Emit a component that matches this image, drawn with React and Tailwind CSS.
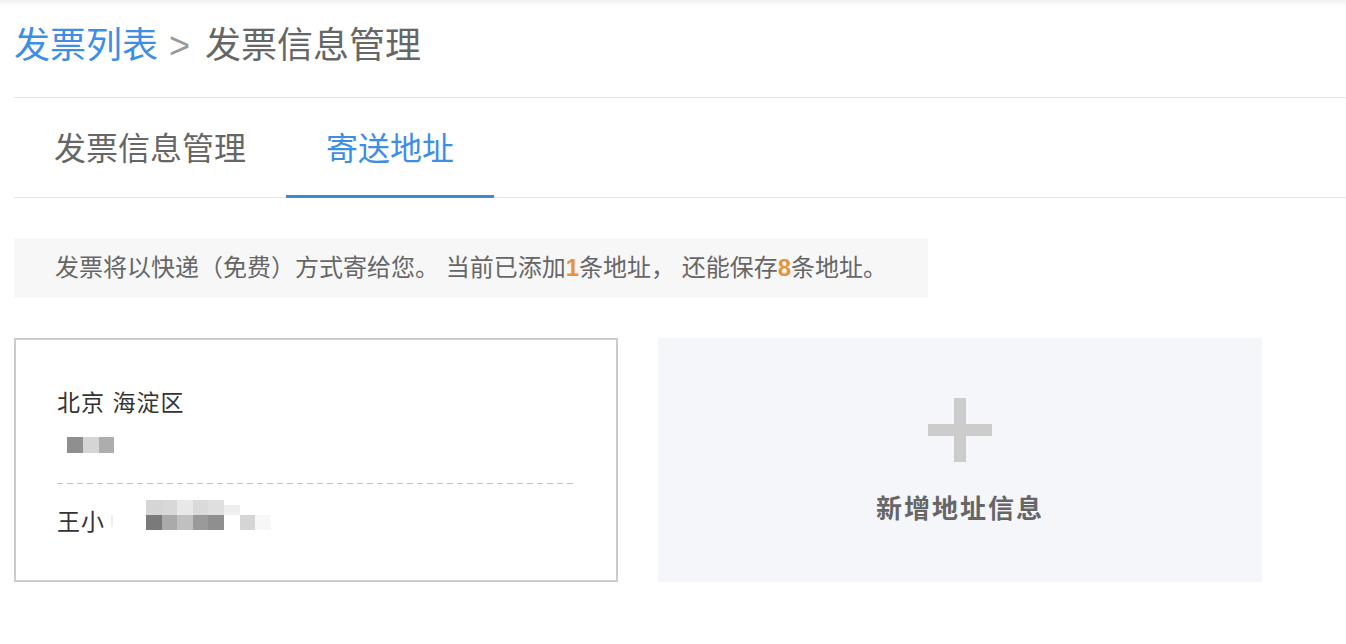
import React from 'react';

const FONT = { fontFamily: '"Liberation Sans", "Noto Sans CJK SC", sans-serif' };

// blurred phone number cells, second line of the card
const topCells = ['#d5d5d5', '#d8d8d8', '#e8e8e8', '#dadada', '#dfdfdf'];
const bottomCells = ['#7a7a7a', '#aaaaaa', '#c0c0c0', '#9a9a9a', '#8f8f8f'];

function Tabs() {
  return (
    <div className="flex border-b border-[#e6e6e6]">
      <div className="h-[100px] -mb-px flex items-center pt-[4px] px-[40px] border-b-[3px] border-transparent text-[32px] leading-[36px] text-[#666]">
        发票信息管理
      </div>
      <div className="h-[100px] -mb-px flex items-center pt-[4px] px-[40px] border-b-[3px] border-[#3b87e0] text-[32px] leading-[36px] text-[#3d8ee4]">
        寄送地址
      </div>
    </div>
  );
}

function AddressCard() {
  return (
    <div className="w-[604px] h-[244px] border-2 border-[#cccccc] bg-white pl-[41px] pr-[39px] pt-[51px]">
      <div className="text-[23px] leading-[24px] tracking-[1px] text-[#333]">北京 海淀区</div>
      <div className="mt-[22px] flex ml-[10px]">
        <div className="w-4 h-4 bg-[#8f8f8f]" />
        <div className="w-4 h-4 bg-[#d4d6d4]" />
        <div className="w-[15px] h-4 bg-[#adadad]" />
      </div>
      <div className="mt-[30px] h-px bg-[repeating-linear-gradient(to_right,#c4c4c4_0,#c4c4c4_6px,transparent_6px,transparent_10px)]" />
      <div className="mt-[16px] flex items-start">
        <div className="mt-[10px] text-[23px] leading-[24px] tracking-[1px] text-[#333]">王小</div>
        <div className="mt-[15px] ml-[6px] w-[2px] h-[12px] bg-[#eeeeee]" />
        <div className="ml-[33px] flex flex-col">
          <div className="flex items-end h-[15px]">
            {topCells.map((c, i) => (
              <div key={i} className="w-[15.6px] h-[15px]" style={{ backgroundColor: c }} />
            ))}
            <div className="w-[15.6px] h-[10px] bg-[#eeeeee]" />
          </div>
          <div className="flex h-[15px]">
            {bottomCells.map((c, i) => (
              <div key={i} className="w-[15.6px] h-[15px]" style={{ backgroundColor: c }} />
            ))}
            <div className="w-[15.6px] h-[15px]" />
            <div className="w-[15.6px] h-[15px] bg-[#d5d5d5]" />
            <div className="w-[15.6px] h-[15px] bg-[#f7f7f7]" />
          </div>
        </div>
      </div>
    </div>
  );
}

function AddCard() {
  return (
    <div className="w-[604px] h-[244px] bg-[#f5f6fa] flex flex-col items-center justify-center">
      <div className="relative w-16 h-16">
        <div className="absolute left-[26px] top-0 w-[12px] h-16 bg-[#cccccc]" />
        <div className="absolute top-[26px] left-0 h-[12px] w-16 bg-[#cccccc]" />
      </div>
      <div className="mt-[33px] text-[26px] leading-[28px] tracking-[2px] font-bold text-[#666]">新增地址信息</div>
    </div>
  );
}

export default function App() {
  return (
    <div
      className="min-h-[644px] w-full bg-white pl-[14px] shadow-[inset_0_6px_6px_-4px_rgba(0,0,0,0.08)]"
      style={FONT}
    >
      {/* breadcrumb */}
      <div className="h-[98px] pt-[28px] border-b border-[#e8e8e8] text-[36px] leading-[36px] flex items-start">
        <span className="text-[#3d8ee4]">发票列表</span>
        <span className="text-[#999] ml-[11px] mr-[15px]">&gt;</span>
        <span className="text-[#666]">发票信息管理</span>
      </div>

      <Tabs />

      {/* notice */}
      <div className="mt-[40px] w-[914px] h-[60px] bg-[#f7f7f7] pl-[41px] text-[24px] leading-[60px] text-[#666]">
        发票将以快递（免费）方式寄给您。 当前已添加<span className="font-bold text-[#e8923a]">1</span>条地址， 还能保存<span className="font-bold text-[#e8923a]">8</span>条地址。
      </div>

      <div className="mt-[40px] flex gap-[40px]">
        <AddressCard />
        <AddCard />
      </div>
    </div>
  );
}
